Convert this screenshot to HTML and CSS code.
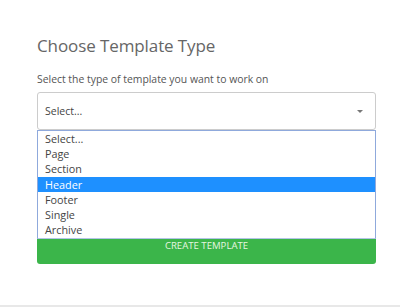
FILE: index.html
```html
<!DOCTYPE html>
<html lang="en">
<head>
  <meta charset="UTF-8">
  <title>Choose Template Type</title>
  <link rel="stylesheet" href="styles.css">
</head>
<body>
  <div class="modal">
    <h2>Choose Template Type</h2>
    <label class="field-label">Select the type of template you want to work on</label>
    <div class="select-box">
      <span>Select...</span>
      <span class="caret"></span>
    </div>
    <ul class="options">
      <li>Select...</li>
      <li>Page</li>
      <li>Section</li>
      <li class="active">Header</li>
      <li>Footer</li>
      <li>Single</li>
      <li>Archive</li>
    </ul>
    <button class="create-btn">CREATE TEMPLATE</button>
  </div>
  <div class="footer-line"></div>
</body>
</html>
```

FILE: styles.css
```css
body {
  margin: 0;
  font-family: 'Open Sans', Arial, sans-serif;
  background: #fff;
  color: #555;
}
.modal {
  width: 339px;
  padding: 34px 0 0 37px;
  height: 271px;
}
h2 {
  margin: 0 0 14px 0;
  font-size: 17px;
  font-weight: normal;
  color: #666;
  line-height: 24px;
  letter-spacing: -0.1px;
}
.field-label {
  display: block;
  font-size: 10.4px;
  line-height: 14px;
  color: #555;
  margin-bottom: 6px;
}
.select-box {
  display: flex;
  align-items: center;
  justify-content: space-between;
  height: 36px;
  border: 1px solid #ccc;
  border-radius: 3px;
  padding: 0 12px 0 7px;
  font-size: 10.5px;
  color: #444;
}
.caret {
  width: 0;
  height: 0;
  border-left: 3px solid transparent;
  border-right: 3px solid transparent;
  border-top: 3px solid #777;
}
.options {
  list-style: none;
  margin: 0;
  padding: 0 0 1px 0;
  border: 1px solid #8fa9dc;
  border-bottom-color: #b3c4e6;
}
.options li {
  height: 15.2px;
  line-height: 15px;
  padding-left: 7px;
  font-size: 10.8px;
  color: #444;
}
.options li.active {
  background: #1e90ff;
  color: #fff;
}
.create-btn {
  display: block;
  width: 100%;
  height: 25px;
  border: none;
  border-radius: 0 0 3px 3px;
  background: #3bb54a;
  color: #e6f5e0;
  font-family: inherit;
  font-size: 9.6px;
  line-height: 14px;
  padding: 0 0 11px 0;
  cursor: pointer;
}
.footer-line {
  border-top: 2px solid #e8e8e8;
}
```
